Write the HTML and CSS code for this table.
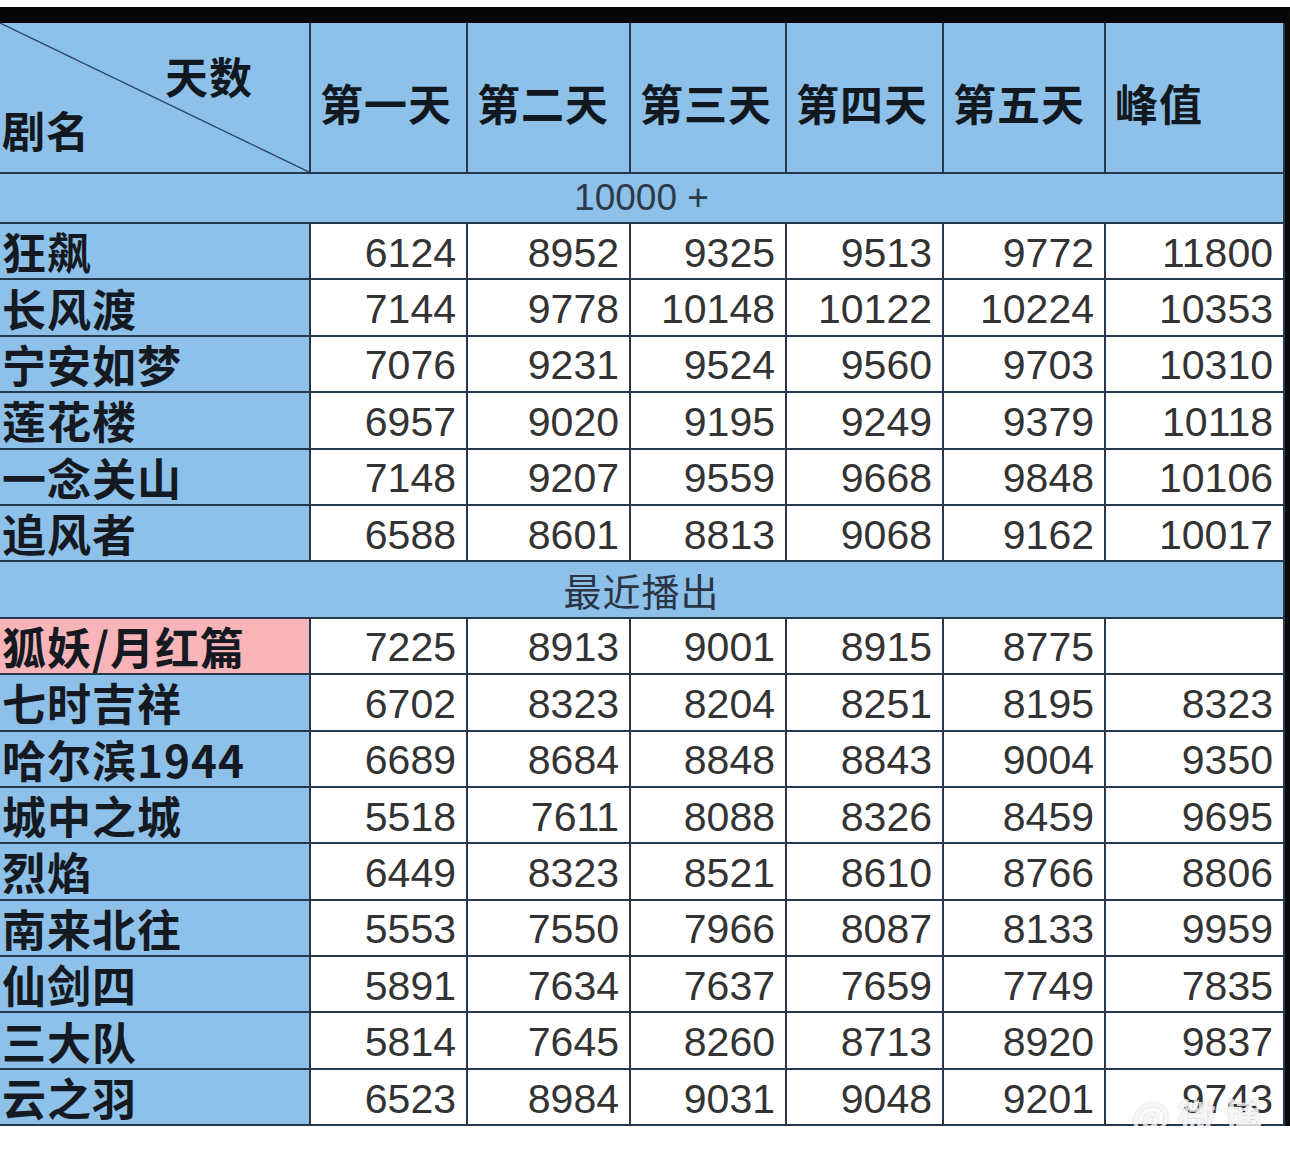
FILE: index.html
```html
<!DOCTYPE html>
<html lang="zh">
<head>
<meta charset="utf-8">
<title>收视数据</title>
<link rel="stylesheet" href="styles.css">
</head>
<body>
<div class="frame">
  <table class="sheet">
    <colgroup>
      <col class="c0"><col class="c1"><col class="c2"><col class="c3"><col class="c4"><col class="c5"><col class="c6">
    </colgroup>
    <thead>
      <tr class="head">
        <th class="corner">
          <div class="hcell corner-box">
            <div class="days">天数</div>
            <div class="drama">剧名</div>
          </div>
        </th>
        <th><div class="hcell">第一天</div></th>
        <th><div class="hcell">第二天</div></th>
        <th><div class="hcell">第三天</div></th>
        <th><div class="hcell">第四天</div></th>
        <th><div class="hcell">第五天</div></th>
        <th><div class="hcell">峰值</div></th>
      </tr>
    </thead>
    <tbody>
      <tr class="group first"><td colspan="7">10000 +</td></tr>
      <tr><th>狂飙</th><td>6124</td><td>8952</td><td>9325</td><td>9513</td><td>9772</td><td>11800</td></tr>
      <tr><th>长风渡</th><td>7144</td><td>9778</td><td>10148</td><td>10122</td><td>10224</td><td>10353</td></tr>
      <tr><th>宁安如梦</th><td>7076</td><td>9231</td><td>9524</td><td>9560</td><td>9703</td><td>10310</td></tr>
      <tr><th>莲花楼</th><td>6957</td><td>9020</td><td>9195</td><td>9249</td><td>9379</td><td>10118</td></tr>
      <tr><th>一念关山</th><td>7148</td><td>9207</td><td>9559</td><td>9668</td><td>9848</td><td>10106</td></tr>
      <tr><th>追风者</th><td>6588</td><td>8601</td><td>8813</td><td>9068</td><td>9162</td><td>10017</td></tr>
      <tr class="group"><td colspan="7" class="cjk">最近播出</td></tr>
      <tr><th class="pink">狐妖/月红篇</th><td>7225</td><td>8913</td><td>9001</td><td>8915</td><td>8775</td><td></td></tr>
      <tr><th>七时吉祥</th><td>6702</td><td>8323</td><td>8204</td><td>8251</td><td>8195</td><td>8323</td></tr>
      <tr><th>哈尔滨1944</th><td>6689</td><td>8684</td><td>8848</td><td>8843</td><td>9004</td><td>9350</td></tr>
      <tr><th>城中之城</th><td>5518</td><td>7611</td><td>8088</td><td>8326</td><td>8459</td><td>9695</td></tr>
      <tr><th>烈焰</th><td>6449</td><td>8323</td><td>8521</td><td>8610</td><td>8766</td><td>8806</td></tr>
      <tr><th>南来北往</th><td>5553</td><td>7550</td><td>7966</td><td>8087</td><td>8133</td><td>9959</td></tr>
      <tr><th>仙剑四</th><td>5891</td><td>7634</td><td>7637</td><td>7659</td><td>7749</td><td>7835</td></tr>
      <tr><th>三大队</th><td>5814</td><td>7645</td><td>8260</td><td>8713</td><td>8920</td><td>9837</td></tr>
      <tr><th>云之羽</th><td>6523</td><td>8984</td><td>9031</td><td>9048</td><td>9201</td><td>9743</td></tr>
    </tbody>
  </table>
  <div class="watermark">@微博</div>
</div>
</body>
</html>
```

FILE: styles.css
```css
html, body {
  margin: 0;
  padding: 0;
  background: #ffffff;
}

.frame {
  position: relative;
  width: 1284px;
  margin-top: 7px;
  border-top: 16px solid #050505;
  border-right: 6px solid #0a0a0a;
}

.sheet {
  border-collapse: collapse;
  table-layout: fixed;
  width: 1284px;
}

.c0 { width: 310px; }
.c1 { width: 157px; }
.c2 { width: 163px; }
.c3 { width: 156px; }
.c4 { width: 157px; }
.c5 { width: 162px; }
.c6 { width: 179px; }

.sheet th,
.sheet td {
  border: 2px solid #26384c;
  padding: 0;
}

.sheet thead th { border-top: none; }
.sheet th:first-child { border-left: none; }

.head th {
  background: #8dc1e9;
  font-family: "Noto Sans CJK SC", "Noto Sans", sans-serif;
  font-weight: 700;
  font-size: 43px;
  color: #121820;
  text-align: left;
  letter-spacing: 1px;
  vertical-align: top;
  white-space: nowrap;
}

.hcell {
  box-sizing: border-box;
  height: 149px;
  display: flex;
  align-items: center;
  padding: 8px 0 0 9px;
  line-height: 52px;
}

.head th.corner {
  background:
    linear-gradient(to top right, transparent calc(50% - 1.2px), #1f3650 50%, transparent calc(50% + 1.2px)),
    #8dc1e9;
}

.corner-box {
  display: flex;
  flex-direction: column;
  align-items: stretch;
  justify-content: flex-start;
  padding: 26px 0 0 2px;
}

.corner .days {
  text-align: right;
  padding-right: 56px;
  line-height: 52px;
}

.corner .drama {
  line-height: 52px;
  margin-top: 2px;
}

.sheet tbody tr {
  height: 56.4px;
}

.sheet tbody th {
  background: #8dc1e9;
  font-family: "Noto Sans CJK SC", "Noto Sans", sans-serif;
  font-weight: 700;
  font-size: 44px;
  color: #151a22;
  text-align: left;
  padding: 0 0 0 2px;
  line-height: 52px;
  white-space: nowrap;
  letter-spacing: 1px;
}

.sheet tbody th.pink {
  background: #f8b4b8;
}

.sheet tbody td {
  background: #ffffff;
  font-family: "Liberation Sans", Arial, sans-serif;
  font-size: 41px;
  color: #333333;
  text-align: right;
  padding: 3px 10px 0 0;
  line-height: 50px;
}

.sheet tr.group {
  height: 50px;
}

.sheet tr.group td {
  background: #8dc1e9;
  text-align: center;
  padding: 0;
  font-size: 37px;
  color: #2c3a4a;
  line-height: 46px;
  border-left: none;
}

.sheet tr.group:not(.first) {
  height: 56.4px;
}

.sheet tr.group td.cjk {
  font-family: "Noto Sans CJK SC", "Noto Sans", sans-serif;
  font-size: 38px;
  font-weight: 400;
  color: #2a3444;
  letter-spacing: 1px;
}

.watermark {
  position: absolute;
  right: 14px;
  top: 1070px;
  font-family: "Noto Sans CJK SC", sans-serif;
  font-size: 38px;
  font-weight: 700;
  line-height: 44px;
  color: rgba(255, 255, 255, 0.8);
  text-shadow: 0 0 3px rgba(0, 0, 0, 0.2);
  letter-spacing: 8px;
}
```
